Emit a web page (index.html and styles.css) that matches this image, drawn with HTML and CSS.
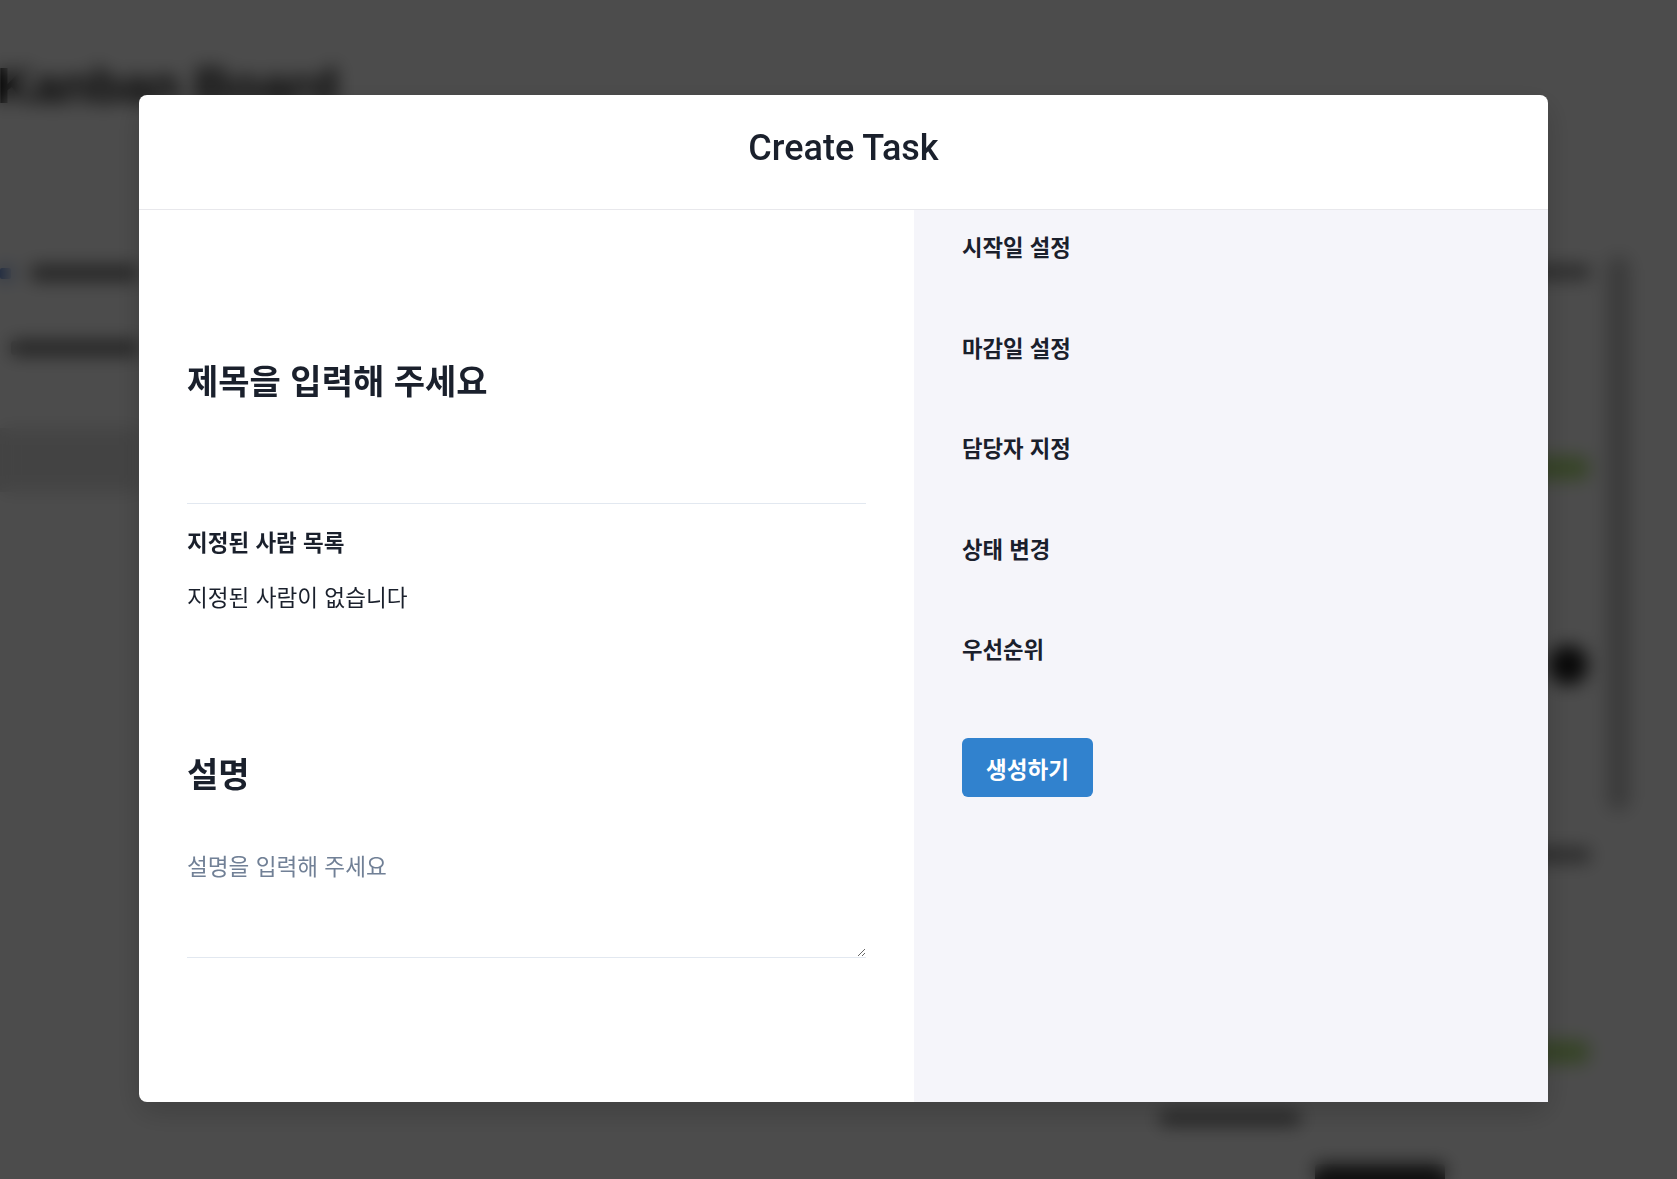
FILE: index.html
```html
<!DOCTYPE html>
<html lang="ko">
<head>
<meta charset="utf-8">
<title>Create Task</title>
<link rel="stylesheet" href="styles.css">
</head>
<body>
  <div class="page">
    <h1 class="page-title">Kanban Board</h1>
    <div class="board">
      <aside class="sidebar">
        <div class="side-row first"><span class="dot"></span><span class="bar bar-a"></span></div>
        <div class="side-row second"><span class="bar bar-b"></span></div>
        <div class="side-card"></div>
      </aside>
      <div class="board-main">
        <div class="foot-text"></div>
        <div class="foot-blob"></div>
      </div>
      <div class="lane">
        <div class="lane-text first"></div>
        <div class="lane-pill first"></div>
        <div class="lane-avatar"></div>
        <div class="lane-text second"></div>
        <div class="lane-pill second"></div>
      </div>
      <div class="track"></div>
    </div>
  </div>

  <div class="overlay">
    <section class="modal">
      <header class="modal-header">
        <h2 class="modal-title">Create Task</h2>
      </header>
      <div class="modal-body">
        <div class="main-col">
          <input class="title-input" type="text" placeholder="제목을 입력해 주세요">
          <h3 class="assignee-label">지정된 사람 목록</h3>
          <p class="empty-text">지정된 사람이 없습니다</p>
          <h3 class="desc-label">설명</h3>
          <textarea class="desc-input" placeholder="설명을 입력해 주세요"></textarea>
        </div>
        <aside class="side-col">
          <div class="side-item">시작일 설정</div>
          <div class="side-item">마감일 설정</div>
          <div class="side-item">담당자 지정</div>
          <div class="side-item">상태 변경</div>
          <div class="side-item">우선순위</div>
          <button class="create-btn" type="button">생성하기</button>
        </aside>
      </div>
    </section>
  </div>
</body>
</html>
```

FILE: styles.css
```css
html, body {
  margin: 0;
  padding: 0;
}

body {
  width: 1677px;
  height: 1179px;
  overflow: hidden;
  background: #ffffff;
  font-family: "Noto Sans CJK KR", "Liberation Sans", sans-serif;
}

/* ---------- background page (blurred behind overlay) ---------- */
.page {
  width: 1677px;
}

.page-title {
  margin: 0 0 0 -3px;
  padding-top: 56px;
  font: 700 50px/60px "Liberation Sans", sans-serif;
  color: #111111;
}

.board {
  display: flex;
  margin-top: 124px;
  padding-right: 47px;
}

.sidebar {
  width: 140px;
  flex: none;
}

.side-row {
  display: flex;
  align-items: center;
  height: 20px;
  gap: 20px;
}

.side-row.first { margin-top: 23px; }
.side-row.second { margin-top: 55px; padding-left: 11px; }

.dot {
  width: 11px;
  height: 11px;
  background: #4a78d0;
  border-radius: 2px;
}

.bar {
  height: 14px;
  background: #666666;
  border-radius: 3px;
}

.bar-a { width: 107px; }
.bar-b { width: 128px; }

.side-card {
  margin-top: 70px;
  height: 64px;
  background: #e2e2e2;
}

.board-main {
  flex: 1;
  min-width: 0;
  padding-top: 871px;
}

.foot-text {
  margin-left: 1020px;
  width: 140px;
  height: 14px;
  background: #777777;
  border-radius: 3px;
}

.foot-blob {
  margin: 39px 0 0 1175px;
  width: 130px;
  height: 24px;
  background: #333333;
  border-radius: 4px;
}

.lane {
  width: 160px;
  flex: none;
}

.lane-text {
  height: 14px;
  width: 140px;
  margin-left: 10px;
  background: #888888;
  border-radius: 3px;
}

.lane-text.first { margin-top: 25px; }
.lane-text.second { margin-top: 163px; }

.lane-pill {
  height: 24px;
  width: 60px;
  margin-left: 90px;
  background: #b3e27f;
  border-radius: 12px;
}

.lane-pill.first { margin-top: 177px; }
.lane-pill.second { margin-top: 178px; }

.lane-avatar {
  margin: 165px 0 0 108px;
  width: 40px;
  height: 40px;
  border-radius: 50%;
  background: #1e1e1e;
}

.track {
  width: 23px;
  height: 555px;
  margin: 16px 0 0 7px;
  background: #c4c4c4;
  border-radius: 12px;
  flex: none;
}

/* ---------- overlay + modal ---------- */
.overlay {
  position: fixed;
  inset: 0;
  background: rgba(0, 0, 0, 0.7);
  backdrop-filter: blur(9px);
  display: flex;
  align-items: flex-start;
  padding: 95px 0 0 139px;
  box-sizing: border-box;
}

.modal {
  width: 1409px;
  height: 1007px;
  background: #ffffff;
  border-radius: 8px;
  display: flex;
  flex-direction: column;
  box-shadow: 0 10px 30px rgba(0, 0, 0, 0.18);
  color: #1a202c;
}

.modal-header {
  padding: 32px 0 40px;
  border-bottom: 1px solid #e8e8ec;
  text-align: center;
}

.modal-title {
  margin: 0;
  font: 500 36px/42px "Roboto", "Noto Sans CJK KR", sans-serif;
  color: #1a202c;
}

.modal-body {
  flex: 1;
  display: flex;
}

.main-col {
  width: 775px;
  flex: none;
  box-sizing: border-box;
  padding: 48px;
  display: flex;
  flex-direction: column;
}

.title-input {
  display: block;
  width: 100%;
  height: 246px;
  box-sizing: border-box;
  margin: 0;
  padding: 0 0 3px;
  border: 0;
  border-bottom: 1px solid #e2e8f0;
  background: transparent;
  outline: none;
  font: 700 34px "Noto Sans CJK KR", sans-serif;
  color: #1a202c;
}

.title-input::placeholder {
  color: #1a202c;
  opacity: 1;
}

.assignee-label {
  margin: 21px 0 0;
  font: 700 22.5px/32px "Noto Sans CJK KR", sans-serif;
  color: #1a202c;
}

.empty-text {
  margin: 24px 0 0;
  font: 400 22.6px/32px "Noto Sans CJK KR", sans-serif;
  color: #1a202c;
}

.desc-label {
  margin: 137.5px 0 0;
  font: 700 34px/44px "Noto Sans CJK KR", sans-serif;
  color: #1a202c;
}

.desc-input {
  display: block;
  width: 100%;
  height: 117px;
  box-sizing: border-box;
  margin: 46.5px 0 0;
  padding: 8px 0;
  border: 0;
  border-bottom: 1px solid #e2e8f0;
  outline: none;
  resize: vertical;
  background: transparent;
  font: 400 22.6px/33px "Noto Sans CJK KR", sans-serif;
  color: #1a202c;
}

.desc-input::placeholder {
  color: #718096;
  opacity: 1;
}

.side-col {
  flex: 1;
  background: #f5f5fa;
  box-sizing: border-box;
  padding: 20px 48px;
  display: flex;
  flex-direction: column;
  align-items: flex-start;
  gap: 68.6px;
}

.side-item {
  font: 600 22.3px/32px "Noto Sans CJK KR", sans-serif;
  color: #1a202c;
}

.create-btn {
  margin-top: 5.3px;
  width: 131px;
  height: 59px;
  padding: 0;
  border: 0;
  border-radius: 6px;
  background: #3182ce;
  color: #ffffff;
  font: 700 22.5px/1 "Noto Sans CJK KR", sans-serif;
  text-align: center;
  cursor: pointer;
}
```
